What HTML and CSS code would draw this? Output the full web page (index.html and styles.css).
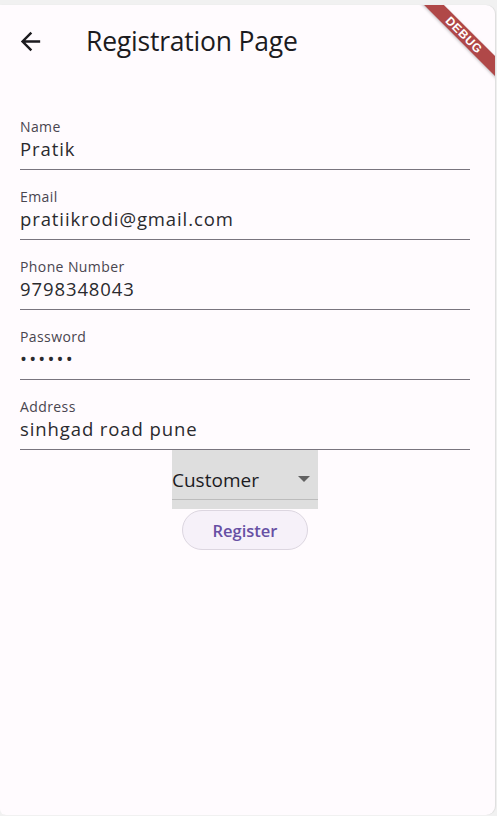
FILE: index.html
```html
<!DOCTYPE html>
<html>
<head>
<meta charset="utf-8">
<link rel="stylesheet" href="styles.css">
</head>
<body>
<div class="window">
  <div class="banner">DEBUG</div>
  <header class="appbar">
    <svg class="back" viewBox="0 0 24 24" width="29" height="29"><path d="M20 11H7.83l5.59-5.59L12 4l-8 8 8 8 1.41-1.41L7.83 13H20v-2z" fill="#1c1b1f"/></svg>
    <h1 class="title">Registration Page</h1>
  </header>
  <main class="form">
    <div class="field"><div class="label">Name</div><div class="value">Pratik</div></div>
    <div class="field"><div class="label">Email</div><div class="value">pratiikrodi@gmail.com</div></div>
    <div class="field"><div class="label">Phone Number</div><div class="value">9798348043</div></div>
    <div class="field"><div class="label">Password</div><div class="value dots">••••••</div></div>
    <div class="field"><div class="label">Address</div><div class="value">sinhgad road pune</div></div>
    <div class="dropdown">
      <div class="dd-row"><span class="dd-text">Customer</span><span class="dd-arrow"></span></div>
    </div>
    <button class="register">Register</button>
  </main>
</div>
</body>
</html>
```
FILE: styles.css
```css
html, body {
  margin: 0;
  padding: 0;
}
body {
  background: #f1f1f1;
  font-family: "Open Sans", "Noto Sans", sans-serif;
  color: #1c1b1f;
}
.window {
  position: relative;
  margin-top: 5px;
  width: 495px;
  height: 810px;
  background: #fffbfe;
  border-radius: 0 9px 9px 6px;
  overflow: hidden;
  box-shadow: 1px 0 1px rgba(0,0,0,0.08);
}
.banner {
  position: absolute;
  top: 23px;
  left: 404px;
  width: 120px;
  height: 14px;
  line-height: 14px;
  transform: rotate(45deg);
  background: #b04848;
  color: #fff;
  font-family: "Liberation Sans", sans-serif;
  font-weight: bold;
  font-size: 12px;
  letter-spacing: 0.6px;
  text-align: center;
  box-shadow: 0 1px 3px rgba(0,0,0,0.25);
}
.appbar {
  height: 72px;
  display: flex;
  align-items: center;
  padding-left: 16px;
}
.back {
  display: block;
  flex: none;
}
.title {
  margin: 0 0 0 41px;
  font-weight: 400;
  font-size: 26.5px;
  letter-spacing: -0.2px;
}
.form {
  padding: 23px 25px 0 20px;
  display: flex;
  flex-direction: column;
}
.field {
  padding: 17px 0 7.5px;
  border-bottom: 1px solid #79747e;
}
.label {
  font-size: 14px;
  line-height: 19px;
  letter-spacing: 0.4px;
  color: #49454f;
}
.value {
  font-size: 18.5px;
  line-height: 25.5px;
  letter-spacing: 0.9px;
  color: #2a2a2e;
}
.dots {
  letter-spacing: 2.2px;
}
.dropdown {
  align-self: center;
  width: 146px;
  height: 59px;
  background: #dedede;
  display: flex;
  flex-direction: column;
}
.dd-row {
  height: 50px;
  border-bottom: 1px solid #bcbcbc;
  display: flex;
  align-items: flex-end;
  justify-content: space-between;
  box-sizing: border-box;
  padding-bottom: 6px;
}
.dd-text {
  font-size: 19px;
  font-weight: 500;
  line-height: 26px;
  color: #1c1b1f;
}
.dd-arrow {
  width: 0;
  height: 0;
  border-left: 6.5px solid transparent;
  border-right: 6.5px solid transparent;
  border-top: 6px solid #616161;
  margin: 0 8px 11px 0;
}
.register {
  align-self: center;
  margin-top: 1px;
  width: 126px;
  height: 40px;
  border-radius: 20px;
  border: 1px solid #dcd6e0;
  background: #f6f1f9;
  color: #6750a4;
  font-family: "Open Sans", "Noto Sans", sans-serif;
  font-size: 16.5px;
  font-weight: 600;
  padding: 0;
}
```
